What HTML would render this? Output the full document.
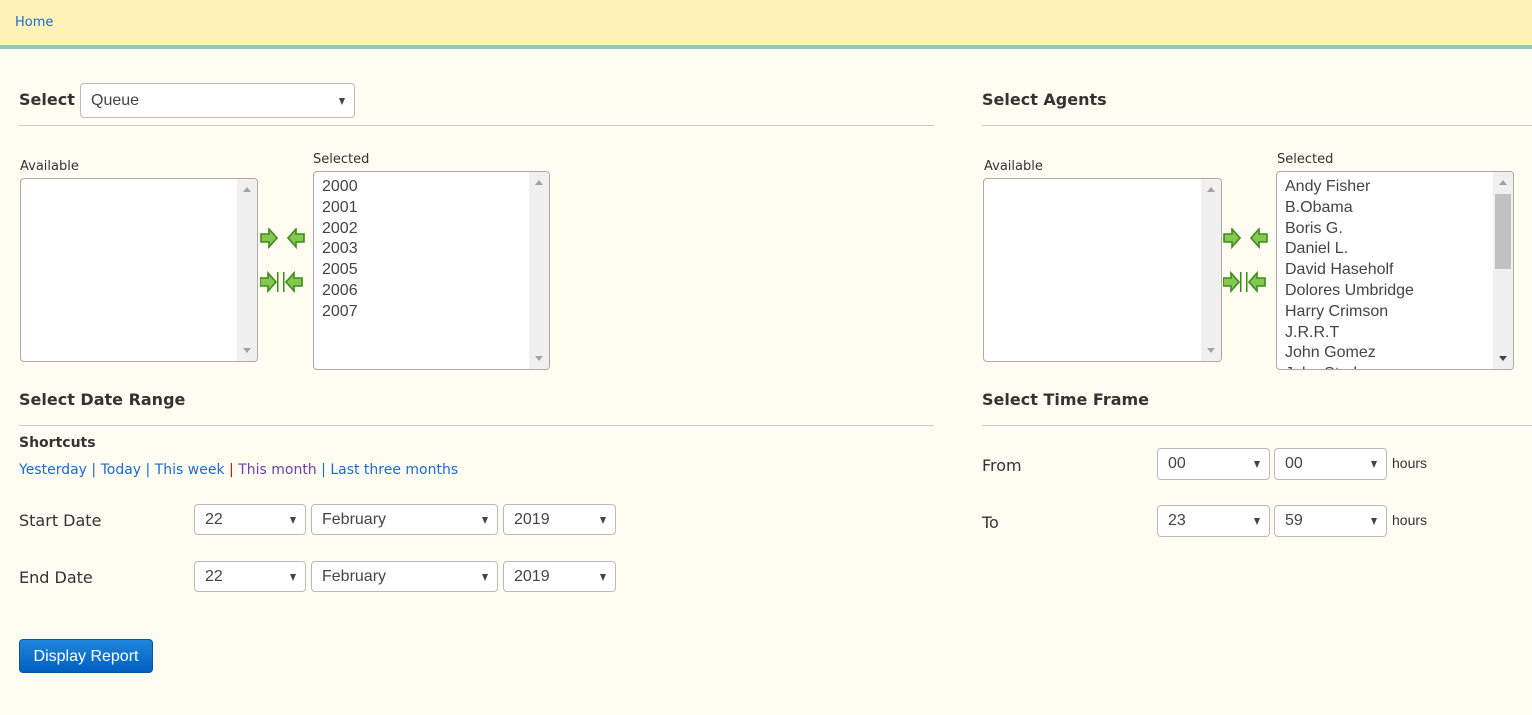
<!DOCTYPE html>
<html><head><meta charset="utf-8"><style>
*{box-sizing:border-box;margin:0;padding:0}
body{width:1532px;height:715px;background:#fffcf2;position:relative;overflow:hidden;font-family:"DejaVu Sans",Verdana,sans-serif;color:#333}
.a{position:absolute;white-space:nowrap}
.top{position:absolute;left:0;top:0;width:1532px;height:49px;background:#fff3b8;border-bottom:4px solid #93c7c6}
.h{font-weight:bold;font-size:16px;color:#333}
.hr{position:absolute;height:1px;background:#ccc}
.lbl{font-size:13px;color:#333}
.sel{position:absolute;background:#fff;border:1px solid #bbb;border-radius:4px;font-family:"Liberation Sans",Arial,sans-serif;font-size:16px;color:#444;padding-left:10px}
.sel:after{content:"";position:absolute;right:9px;top:50%;margin-top:-3px;border-left:3.5px solid transparent;border-right:3.5px solid transparent;border-top:7px solid #444}
.box{position:absolute;background:#fff;border:1px solid #aaa;border-radius:4px;overflow:hidden;font-family:"Liberation Sans",Arial,sans-serif;font-size:16px;color:#444}
.sb{position:absolute;right:0;top:0;bottom:0;width:20px;background:#f0f0f0}
.up,.dn{position:absolute;left:6px;border-left:4px solid transparent;border-right:4px solid transparent}
.up{top:8px;border-bottom:5px solid #a3a3a3}
.dn{bottom:8px;border-top:5px solid #a3a3a3}
.items{position:absolute;left:8px;top:5px;line-height:20.8px}
a{color:#1a6bd0;text-decoration:none}
</style></head><body>
<div class="top"></div>
<a class="a" style="left:15px;top:15px;font-size:13px;font-family:'DejaVu Sans',sans-serif">Home</a>

<svg width="0" height="0" style="position:absolute"><defs>
<g id="r"><polygon points="1,6 9,6 9,1 17,10 9,19 9,14 1,14" fill="#84c850" stroke="#3d8a1c" stroke-width="1.6"/></g>
<g id="l"><polygon points="17,6 9,6 9,1 1,10 9,19 9,14 17,14" fill="#84c850" stroke="#3d8a1c" stroke-width="1.6"/></g>
</defs></svg>

<div class="a h" style="left:19px;top:90px">Select</div>
<div class="sel" style="left:80px;top:83px;width:275px;height:35px;line-height:33px">Queue</div>
<div class="hr" style="left:19px;top:125px;width:915px"></div>
<div class="a lbl" style="left:20px;top:159px">Available</div>
<div class="box" style="left:20px;top:178px;width:238px;height:184px"><div class="sb"><div class="up"></div><div class="dn"></div></div></div>
<svg class="a" style="left:260px;top:228px" width="46" height="66"><use href="#r"/><use href="#l" x="27"/>
<g transform="translate(0,44)"><use href="#r" x="-1"/><rect x="17" y="0" width="1.5" height="20" fill="#3d8a1c"/><rect x="23" y="0" width="1.5" height="20" fill="#3d8a1c"/><use href="#l" x="25"/></g></svg>
<div class="a lbl" style="left:313px;top:152px">Selected</div>
<div class="box" style="left:313px;top:171px;width:237px;height:199px"><div class="sb"><div class="up"></div><div class="dn"></div></div>
<div class="items">2000<br>2001<br>2002<br>2003<br>2005<br>2006<br>2007</div></div>

<div class="a h" style="left:19px;top:390px">Select Date Range</div>
<div class="hr" style="left:19px;top:425px;width:915px"></div>
<div class="a" style="left:19px;top:435px;font-size:14px;font-weight:bold">Shortcuts</div>
<div class="a" style="left:19px;top:462px;font-size:14px;color:#1a6bd0"><a>Yesterday</a> | <a>Today</a> | <a>This week</a> <span style="color:#8b2a1a">|</span> <a style="color:#6a3fb0">This month</a> | <a>Last three months</a></div>

<div class="a" style="left:19px;top:511px;font-size:16px">Start Date</div>
<div class="sel" style="left:194px;top:504px;width:112px;height:31px;line-height:29px">22</div>
<div class="sel" style="left:311px;top:504px;width:187px;height:31px;line-height:29px">February</div>
<div class="sel" style="left:503px;top:504px;width:113px;height:31px;line-height:29px">2019</div>
<div class="a" style="left:19px;top:568px;font-size:16px">End Date</div>
<div class="sel" style="left:194px;top:561px;width:112px;height:31px;line-height:29px">22</div>
<div class="sel" style="left:311px;top:561px;width:187px;height:31px;line-height:29px">February</div>
<div class="sel" style="left:503px;top:561px;width:113px;height:31px;line-height:29px">2019</div>

<div class="a" style="left:19px;top:639px;width:134px;height:34px;border-radius:4px;background:linear-gradient(#1f86dc,#0060c0);border:1px solid #0a55a8;color:#fff;font-family:'Liberation Sans',Arial,sans-serif;font-size:16px;text-align:center;line-height:33px">Display Report</div>

<div class="a h" style="left:982px;top:90px">Select Agents</div>
<div class="hr" style="left:982px;top:125px;width:550px"></div>
<div class="a lbl" style="left:984px;top:159px">Available</div>
<div class="box" style="left:983px;top:178px;width:239px;height:184px"><div class="sb"><div class="up"></div><div class="dn"></div></div></div>
<svg class="a" style="left:1223px;top:228px" width="46" height="66"><use href="#r"/><use href="#l" x="27"/>
<g transform="translate(0,44)"><use href="#r" x="-1"/><rect x="17" y="0" width="1.5" height="20" fill="#3d8a1c"/><rect x="23" y="0" width="1.5" height="20" fill="#3d8a1c"/><use href="#l" x="25"/></g></svg>
<div class="a lbl" style="left:1277px;top:152px">Selected</div>
<div class="box" style="left:1276px;top:171px;width:238px;height:199px"><div class="sb"><div class="up"></div><div style="position:absolute;left:2px;top:22px;width:16px;height:75px;background:#c1c1c1"></div><div class="dn" style="border-top-color:#444"></div></div>
<div class="items" style="font-family:'Liberation Sans',Arial,sans-serif">Andy Fisher<br>B.Obama<br>Boris G.<br>Daniel L.<br>David Haseholf<br>Dolores Umbridge<br>Harry Crimson<br>J.R.R.T<br>John Gomez<br>John Stark</div></div>

<div class="a h" style="left:982px;top:390px">Select Time Frame</div>
<div class="hr" style="left:982px;top:425px;width:550px"></div>
<div class="a" style="left:982px;top:456px;font-size:16px">From</div>
<div class="sel" style="left:1157px;top:448px;width:113px;height:32px;line-height:30px">00</div>
<div class="sel" style="left:1274px;top:448px;width:113px;height:32px;line-height:30px">00</div>
<div class="a" style="left:1392px;top:455px;font-size:14px;font-family:'Liberation Sans',Arial,sans-serif">hours</div>
<div class="a" style="left:982px;top:513px;font-size:16px">To</div>
<div class="sel" style="left:1157px;top:505px;width:113px;height:32px;line-height:30px">23</div>
<div class="sel" style="left:1274px;top:505px;width:113px;height:32px;line-height:30px">59</div>
<div class="a" style="left:1392px;top:512px;font-size:14px;font-family:'Liberation Sans',Arial,sans-serif">hours</div>
</body></html>
